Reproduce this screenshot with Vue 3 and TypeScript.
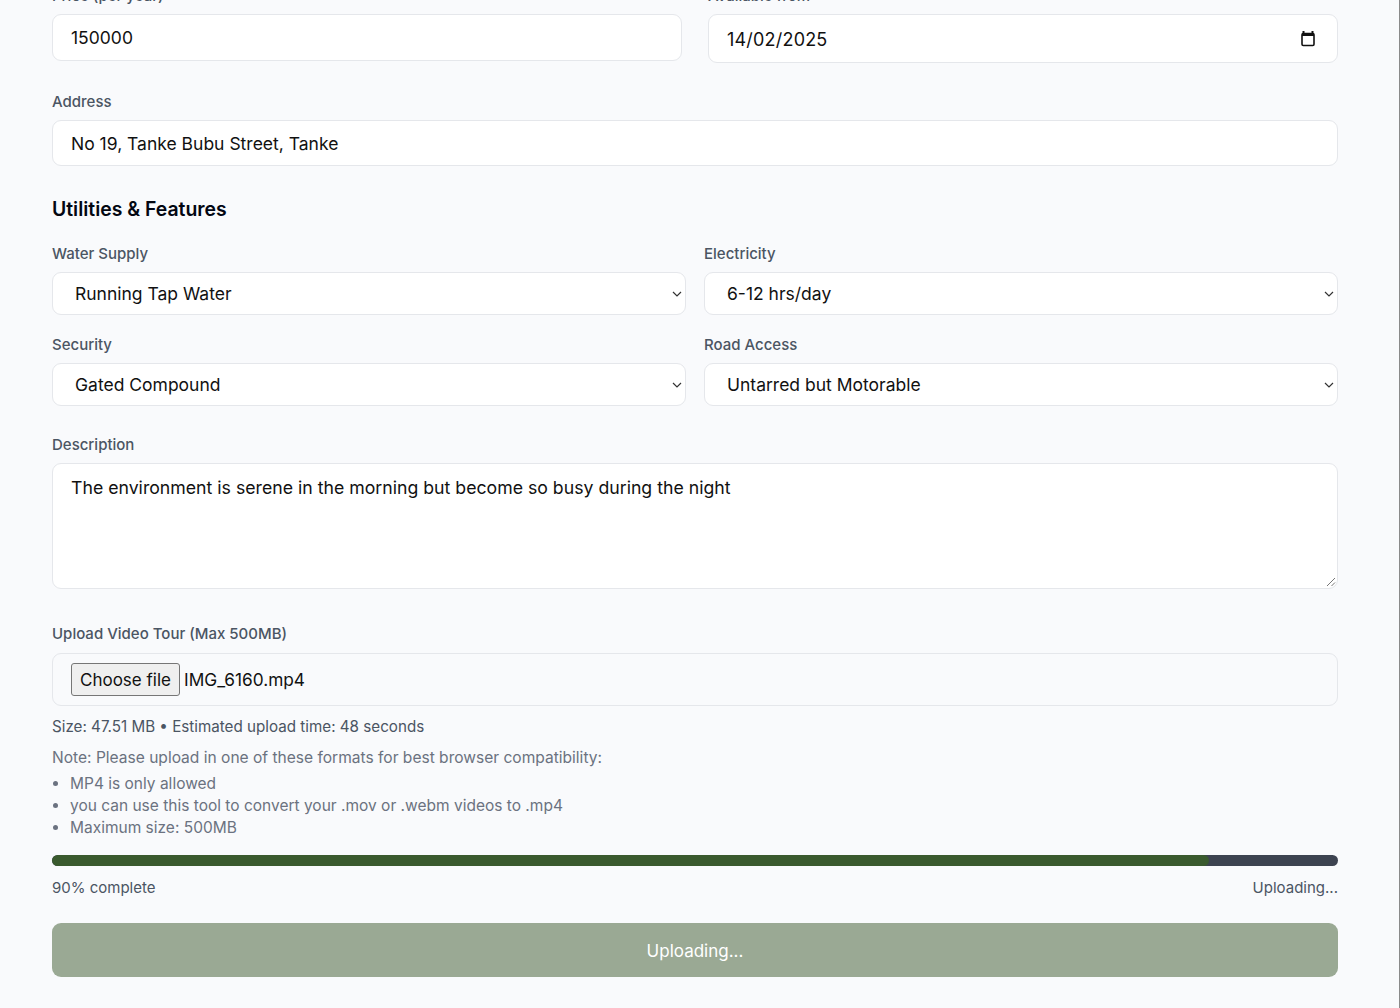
<script setup lang="ts">
const selectRows: { label: string; value: string }[] = [
  { label: 'Water Supply', value: 'Running Tap Water' },
  { label: 'Electricity', value: '6-12 hrs/day' },
  { label: 'Security', value: 'Gated Compound' },
  { label: 'Road Access', value: 'Untarred but Motorable' },
]
const notes: string[] = [
  'MP4 is only allowed',
  'you can use this tool to convert your .mov or .webm videos to .mp4',
  'Maximum size: 500MB',
]
const progress = 90
</script>

<template>
  <div class="viewport">
    <form class="page" @submit.prevent>
      <div class="two-wide">
        <div class="field">
          <label class="label">Price (per year)</label>
          <div class="box box-price">150000</div>
        </div>
        <div class="field">
          <label class="label">Available from</label>
          <div class="box box-date">
            <span class="date-text">14/02/2025</span>
            <svg class="cal" width="16" height="18" viewBox="0 0 16 18" aria-hidden="true">
              <path d="M3.5 1v2M12.5 1v2" stroke="#111" stroke-width="2" fill="none" />
              <rect x="2" y="3.5" width="12" height="12" rx="1.2" fill="none" stroke="#111" stroke-width="1.6" />
              <rect x="2" y="3" width="12" height="3" fill="#111" />
            </svg>
          </div>
        </div>
      </div>

      <div class="field address">
        <label class="label">Address</label>
        <div class="box box-address">No 19, Tanke Bubu Street, Tanke</div>
      </div>

      <h3 class="heading">Utilities &amp; Features</h3>

      <div class="select-grid">
        <div v-for="row in selectRows" :key="row.label" class="field">
          <label class="label">{{ row.label }}</label>
          <div class="box box-select">
            <span>{{ row.value }}</span>
            <svg class="chev" width="10" height="6" viewBox="0 0 10 6" aria-hidden="true">
              <path d="M1 1l4 4 4-4" fill="none" stroke="#333" stroke-width="1.2" />
            </svg>
          </div>
        </div>
      </div>

      <div class="field description">
        <label class="label">Description</label>
        <div class="box box-text">
          The environment is serene in the morning but become so busy during the night
          <svg class="grip" width="10" height="10" viewBox="0 0 10 10" aria-hidden="true">
            <path d="M1 9l8-8M5.5 9L9 5.5" stroke="#777" stroke-width="1" fill="none" />
          </svg>
        </div>
      </div>

      <div class="field upload">
        <label class="label">Upload Video Tour (Max 500MB)</label>
        <div class="box box-file">
          <button type="button" class="file-btn">Choose file</button>
          <span class="file-name">IMG_6160.mp4</span>
        </div>
      </div>

      <p class="size">Size: 47.51 MB • Estimated upload time: 48 seconds</p>
      <p class="note">Note: Please upload in one of these formats for best browser compatibility:</p>
      <ul class="notes">
        <li v-for="n in notes" :key="n">{{ n }}</li>
      </ul>

      <div class="track">
        <div class="fill" :style="{ width: progress + '%' }"></div>
      </div>
      <div class="progress-row">
        <span>{{ progress }}% complete</span>
        <span>Uploading...</span>
      </div>

      <button type="submit" class="submit" disabled>Uploading...</button>
    </form>
  </div>
</template>

<style>
html, body { margin: 0; padding: 0; background: #f9fafc; }
</style>

<style scoped>
.viewport {
  height: 1008px;
  overflow: hidden;
  background: #f9fafc;
  border-right: 1px solid #8a8a8a;
  box-sizing: border-box;
  font-family: Inter, "Liberation Sans", sans-serif;
}
.page {
  margin-top: -13px;
  padding: 0 61px 0 52px;
  display: flex;
  flex-direction: column;
}
.two-wide { display: grid; grid-template-columns: 1fr 1fr; column-gap: 26px; align-items: start; }
.field { display: flex; flex-direction: column; }
.label {
  font-size: 15px;
  line-height: 18px;
  font-weight: 500;
  color: #4b5563;
  margin-bottom: 9px;
}
.box {
  box-sizing: border-box;
  background: #fff;
  border: 1px solid #e5e7eb;
  border-radius: 9px;
  font-size: 17.5px;
  color: #111;
  display: flex;
  align-items: center;
  padding: 1px 18px 0;
}
.box-price { height: 47px; padding-top: 0; }
.box-date { height: 49px; justify-content: space-between; padding-right: 21px; }
.date-text { font-size: 18px; letter-spacing: 0.2px; }
.address { margin-top: 30px; }
.box-address { height: 46px; }
.heading {
  margin: 29px 0 0;
  font-size: 19.4px;
  line-height: 28px;
  font-weight: 600;
  color: #030712;
}
.select-grid {
  margin-top: 22px;
  display: grid;
  grid-template-columns: 1fr 1fr;
  column-gap: 18px;
  row-gap: 21px;
}
.box-select { height: 43px; padding: 0 3px 0 22px; justify-content: space-between; }
.description { margin-top: 30px; }
.box-text {
  height: 126px;
  padding: 13px 18px;
  position: relative;
  display: block;
  font-size: 17.7px;
  line-height: 22px;
}
.grip { position: absolute; right: 1px; bottom: 1px; }
.upload { margin-top: 36px; }
.box-file { height: 53px; margin-top: 1px; background: #f9fafc; padding-top: 0; }
.file-btn {
  height: 33px;
  width: 109px;
  padding: 0;
  font-family: inherit;
  font-size: 17px;
  color: #111;
  background: #efefef;
  border: 1px solid #767676;
  border-radius: 3px;
}
.file-name { margin-left: 4px; font-size: 17.3px; }
.size { margin: 11px 0 0; font-size: 15.2px; line-height: 20px; color: #4b5563; }
.note { margin: 11px 0 0; font-size: 15.55px; line-height: 20px; color: #6b7280; }
.notes {
  margin: 5px 0 0;
  padding: 0 0 0 18px;
  font-size: 15.5px;
  line-height: 22px;
  color: #6b7280;
}
.track {
  margin-top: 16px;
  height: 11px;
  border-radius: 6px;
  background: #3d4350;
  overflow: hidden;
}
.fill { height: 100%; background: #3a5a2e; border-radius: 6px; }
.progress-row {
  margin-top: 12px;
  display: flex;
  justify-content: space-between;
  font-size: 15px;
  line-height: 20px;
  color: #4b5563;
}
.submit {
  margin-top: 25px;
  height: 54px;
  padding: 1px 0 0;
  border: none;
  border-radius: 9px;
  background: #9aa994;
  color: #fff;
  font-family: inherit;
  font-size: 17px;
  font-weight: 400;
}
</style>
